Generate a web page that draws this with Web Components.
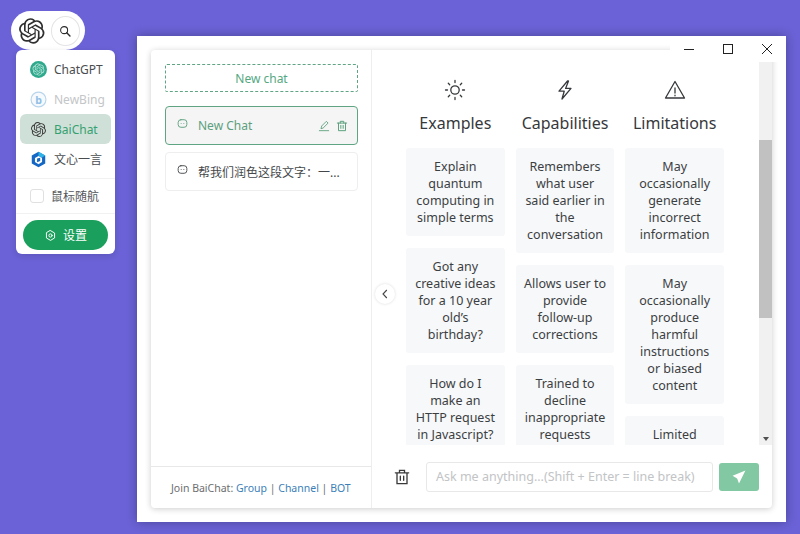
<!DOCTYPE html>
<html>
<head>
<meta charset="utf-8">
<style>
    html, body { margin: 0; height: 534px; overflow: hidden; }
    body {
        position: relative;
        background-color: #6a62d6;
        font-family: "Noto Sans", "Noto Sans CJK SC", sans-serif;
        color: #333639;
    }
</style>
</head>
<body>
<float-menu></float-menu>
<chat-window>
    <chat-sidebar slot="side"></chat-sidebar>
    <chat-main slot="main">
        <prompt-column title="Examples" icon="sun" cards="Explain quantum computing in simple terms|Got any creative ideas for a 10 year old’s birthday?|How do I make an HTTP request in Javascript?"></prompt-column>
        <prompt-column title="Capabilities" icon="bolt" cards="Remembers what user said earlier in the conversation|Allows user to provide follow-up corrections|Trained to decline inappropriate requests"></prompt-column>
        <prompt-column title="Limitations" icon="warn" cards="May occasionally generate incorrect information|May occasionally produce harmful instructions or biased content|Limited knowledge of world and events after 2021"></prompt-column>
    </chat-main>
</chat-window>

<script>
const OPENAI_PATH = "M22.2819 9.8211a5.9847 5.9847 0 0 0-.5157-4.9108 6.0462 6.0462 0 0 0-6.5098-2.9A6.0651 6.0651 0 0 0 4.9807 4.1818a5.9847 5.9847 0 0 0-3.9977 2.9 6.0462 6.0462 0 0 0 .7427 7.0966 5.98 5.98 0 0 0 .511 4.9107 6.051 6.051 0 0 0 6.5146 2.9001A5.9847 5.9847 0 0 0 13.2599 24a6.0557 6.0557 0 0 0 5.7718-4.2058 5.9894 5.9894 0 0 0 3.9977-2.9001 6.0557 6.0557 0 0 0-.7475-7.0729zm-9.022 12.6081a4.4755 4.4755 0 0 1-2.8764-1.0408l.1419-.0804 4.7783-2.7582a.7948.7948 0 0 0 .3927-.6813v-6.7369l2.02 1.1686a.071.071 0 0 1 .038.052v5.5826a4.504 4.504 0 0 1-4.4945 4.4944zm-9.6607-4.1254a4.4708 4.4708 0 0 1-.5346-3.0137l.142.0852 4.783 2.7582a.7712.7712 0 0 0 .7806 0l5.8428-3.3685v2.3324a.0804.0804 0 0 1-.0332.0615L9.74 19.9502a4.4992 4.4992 0 0 1-6.1408-1.6464zM2.3408 7.8956a4.485 4.485 0 0 1 2.3655-1.9728V11.6a.7664.7664 0 0 0 .3879.6765l5.8144 3.3543-2.0201 1.1685a.0757.0757 0 0 1-.071 0l-4.8303-2.7865A4.504 4.504 0 0 1 2.3408 7.872zm16.5963 3.8558L13.1038 8.364 15.1192 7.2a.0757.0757 0 0 1 .071 0l4.8303 2.7913a4.4944 4.4944 0 0 1-.6765 8.1042v-5.6772a.79.79 0 0 0-.407-.667zm2.0107-3.0231l-.142-.0852-4.7735-2.7818a.7759.7759 0 0 0-.7854 0L9.409 9.2297V6.8974a.0662.0662 0 0 1 .0284-.0615l4.8303-2.7866a4.4992 4.4992 0 0 1 6.6802 4.66zM8.3065 12.863l-2.02-1.1638a.0804.0804 0 0 1-.038-.0567V6.0742a4.4992 4.4992 0 0 1 7.3757-3.4537l-.142.0805L8.704 5.459a.7948.7948 0 0 0-.3927.6813zm1.0976-2.3654l2.602-1.4998 2.6069 1.4998v2.9994l-2.5974 1.4997-2.6067-1.4997Z";

const ICONS = {
    sun: '<circle cx="12" cy="12" r="4.2"/><path d="M12 2.5v2M12 19.5v2M2.5 12h2M19.5 12h2M5.3 5.3l1.4 1.4M17.3 17.3l1.4 1.4M5.3 18.7l1.4-1.4M17.3 6.7l1.4-1.4"/>',
    bolt: '<path d="M14.5 3 6 13.2h5.2L9 21l9-10.6h-5.4L15.5 3z" stroke-linejoin="round"/>',
    warn: '<path d="M12 3.5 2.5 20h19z" stroke-linejoin="round"/><path d="M12 10v5M12 17.2v.6"/>',
    trash: '<path d="M4 7h16M9 7V4h6v3M6 7v13h12V7M10 11v5M14 11v5"/>',
    chat: '<rect x="4" y="5" width="16" height="14" rx="5"/><path d="M9.5 12h.01M14.5 12h.01"/>',
    edit: '<path d="M4 20h16M7 16l1-4 8-8 3 3-8 8z" stroke-linejoin="round"/>',
    gear: '<path d="M12 3l7.5 4.4v9.2L12 21l-7.5-4.4V7.4z" stroke-linejoin="round"/><circle cx="12" cy="12" r="3"/>',
    search: '<circle cx="10.5" cy="10.5" r="6"/><path d="M15 15l5.5 5.5" stroke-width="2.4"/>'
};

function lineIcon( name, size, width ) {
    return `<svg width="${size}" height="${size}" viewBox="0 0 24 24" fill="none" stroke="currentColor" stroke-width="${width}" stroke-linecap="round">${ICONS[name]}</svg>`;
}

const MENU_LOGOS = {
    chatgpt: `<svg width="17" height="17" viewBox="0 0 24 24"><circle cx="12" cy="12" r="12" fill="#2fa98c"/><g transform="translate(3.6 3.6) scale(.7)"><path fill="#bfe8dc" d="${OPENAI_PATH}"/></g></svg>`,
    newbing: `<svg width="17" height="17" viewBox="0 0 24 24"><circle cx="12" cy="12" r="10.5" fill="#f4f9fd" stroke="#9cc4e4" stroke-width="1.6"/><text x="12" y="18" font-size="15" font-weight="700" text-anchor="middle" fill="#5ea5dc" font-family="Noto Sans">b</text></svg>`,
    baichat: `<svg width="15" height="15" viewBox="0 0 24 24"><path fill="#3c3c3c" d="${OPENAI_PATH}"/></svg>`,
    wenxin: `<svg width="17" height="17" viewBox="0 0 24 24"><path fill="#1467c4" d="M12 1l9.5 5.5v11L12 23l-9.5-5.5v-11z"/><path fill="#2fb4e8" d="M12 1l9.5 5.5-5 2.9L12 6.8z"/><path fill="#fff" d="M12 7l5 2.9v5.8L12 18.6l-5-2.9V9.9z"/><path fill="#1467c4" d="M10 10.5l4.4-1v4.6L10 16z"/></svg>`
};

const menuItemTemplate = document.createElement('template');
menuItemTemplate.innerHTML = `
    <style>
        :host {
            display: flex;
            align-items: center;
            height: 30px;
            margin: 0 4px;
            padding-left: 10px;
            gap: 7px;
            border-radius: 6px;
            font-size: 12px;
            color: #4a4d50;
        }
        :host([active]) { background-color: #cfe0d8; color: #35a070; }
        :host([muted]) { color: #c4c6c8; }
        .logo { width: 17px; display: flex; justify-content: center; }
        :host([muted]) .logo { opacity: .7; }
    </style>
    <span class="logo"></span>
    <slot></slot>
`;

class MenuItem extends HTMLElement {
    constructor(){
        super();

        this.attachShadow( { mode:"open" } );
        this.shadowRoot.appendChild( menuItemTemplate.content.cloneNode( true ) );
    }

    connectedCallback() {
        this.shadowRoot.querySelector('.logo').innerHTML = MENU_LOGOS[ this.getAttribute('logo') ];
    }
}

window.customElements.define( 'menu-item', MenuItem );

const floatMenuTemplate = document.createElement('template');
floatMenuTemplate.innerHTML = `
    <style>
        :host {
            position: absolute;
            left: 11px;
            top: 11px;
            width: 104px;
            display: block;
        }
        .pill {
            width: 74px;
            height: 39px;
            box-sizing: border-box;
            padding: 0 5px 0 8px;
            background-color: white;
            border-radius: 20px;
            display: flex;
            align-items: center;
            gap: 6px;
        }
        .search {
            width: 30px;
            height: 30px;
            box-sizing: border-box;
            border: 1px solid #e4e4e4;
            border-radius: 50%;
            display: flex;
            align-items: center;
            justify-content: center;
            color: #2b2b2b;
        }
        .menu {
            margin-left: 5px;
            width: 99px;
            height: 204px;
            box-sizing: border-box;
            padding-top: 4px;
            background-color: white;
            border-radius: 6px;
            box-shadow: 0 2px 6px rgba( 0, 0, 0, .12 );
        }
        .first { margin-bottom: -1px; }
        .gap { height: 29.5px; display: flex; flex-direction: column; }
        .line { height: 1px; background-color: #f1f1f1; }
        .random {
            height: 34px;
            display: flex;
            align-items: center;
            gap: 7px;
            padding-left: 14px;
            font-size: 12px;
            color: #55585b;
            border-top: 1px solid #f1f1f1;
            border-bottom: 1px solid #f1f1f1;
            margin-top: 4px;
        }
        .check {
            width: 14px;
            height: 14px;
            box-sizing: border-box;
            border: 1px solid #e0e0e0;
            border-radius: 3px;
        }
        .setting {
            margin: 6px 7px 0;
            height: 30px;
            background-color: #1aa05c;
            border-radius: 15px;
            color: white;
            font-size: 12px;
            display: flex;
            align-items: center;
            justify-content: center;
            gap: 6px;
        }
    </style>
    <div class="pill">
        <svg width="26" height="26" viewBox="0 0 24 24"><path fill="#2f2f2f" d="${OPENAI_PATH}"/></svg>
        <div class="search">${ lineIcon( 'search', 14, 1.8 ) }</div>
    </div>
    <div class="menu">
        <menu-item logo="chatgpt">ChatGPT</menu-item>
        <menu-item logo="newbing" muted>NewBing</menu-item>
        <menu-item logo="baichat" active>BaiChat</menu-item>
        <menu-item logo="wenxin">文心一言</menu-item>
        <div class="random"><span class="check"></span>鼠标随航</div>
        <div class="setting">${ lineIcon( 'gear', 13, 1.8 ) }<span>设置</span></div>
    </div>
`;

class FloatMenu extends HTMLElement {
    constructor(){
        super();

        this.attachShadow( { mode:"open" } );
        this.shadowRoot.appendChild( floatMenuTemplate.content.cloneNode( true ) );
    }
}

window.customElements.define( 'float-menu', FloatMenu );

const chatWindowTemplate = document.createElement('template');
chatWindowTemplate.innerHTML = `
    <style>
        :host {
            position: absolute;
            left: 137px;
            top: 36px;
            width: 649px;
            height: 486px;
            box-sizing: border-box;
            padding: 14px;
            display: block;
            background-color: white;
            box-shadow: 0 0 10px rgba( 0, 0, 0, .3 );
        }
        .card {
            height: 100%;
            display: flex;
            position: relative;
            border-radius: 4px;
            box-shadow: 0 1px 6px rgba( 0, 0, 0, .2 );
        }
        .controls {
            position: absolute;
            top: 0;
            right: 0;
            width: 116px;
            height: 26px;
            background-color: white;
            display: flex;
            color: #222;
        }
        .controls span {
            flex: 1;
            display: flex;
            align-items: center;
            justify-content: center;
        }
        .toggle {
            position: absolute;
            left: 224px;
            top: 234px;
            width: 20px;
            height: 20px;
            background-color: white;
            border-radius: 50%;
            box-shadow: 0 0 3px rgba( 0, 0, 0, .15 );
            display: flex;
            align-items: center;
            justify-content: center;
            color: #444;
        }
    </style>
    <div class="card">
        <slot name="side"></slot>
        <slot name="main"></slot>
        <div class="toggle">
            <svg width="10" height="10" viewBox="0 0 10 10" fill="none" stroke="currentColor" stroke-width="1.1"><path d="M6.8 1 3 5l3.8 4"/></svg>
        </div>
    </div>
    <div class="controls">
        <span><svg width="10" height="10"><path d="M0 5.5h10" stroke="currentColor"/></svg></span>
        <span><svg width="10" height="10"><rect x=".5" y=".5" width="9" height="9" fill="none" stroke="currentColor"/></svg></span>
        <span><svg width="10" height="10"><path d="M0 0l10 10M10 0 0 10" stroke="currentColor"/></svg></span>
    </div>
`;

class ChatWindow extends HTMLElement {
    constructor(){
        super();

        this.attachShadow( { mode:"open" } );
        this.shadowRoot.appendChild( chatWindowTemplate.content.cloneNode( true ) );
    }
}

window.customElements.define( 'chat-window', ChatWindow );

const chatSessionTemplate = document.createElement('template');
chatSessionTemplate.innerHTML = `
    <style>
        :host {
            display: flex;
            align-items: center;
            box-sizing: border-box;
            height: 39px;
            padding: 0 8px 0 10px;
            gap: 9px;
            border: 1px solid #eeeeee;
            border-radius: 4px;
            font-size: 12px;
            color: #45484b;
        }
        :host([active]) {
            border-color: #5fa583;
            background-color: #f4f5f4;
            color: #5d9f7e;
        }
        .name { flex: 1; white-space: nowrap; overflow: hidden; }
        .tools { display: none; gap: 4px; }
        :host([active]) .tools { display: flex; }
    </style>
    <span class="chat">${ lineIcon( 'chat', 13, 1.7 ) }</span>
    <span class="name"><slot></slot></span>
    <span class="tools">${ lineIcon( 'edit', 14, 1.5 ) }${ lineIcon( 'trash', 14, 1.7 ) }</span>
`;

class ChatSession extends HTMLElement {
    constructor(){
        super();

        this.attachShadow( { mode:"open" } );
        this.shadowRoot.appendChild( chatSessionTemplate.content.cloneNode( true ) );
    }
}

window.customElements.define( 'chat-session', ChatSession );

const chatSidebarTemplate = document.createElement('template');
chatSidebarTemplate.innerHTML = `
    <style>
        :host {
            width: 221px;
            flex: none;
            box-sizing: border-box;
            border-right: 1px solid #eeeeee;
            display: flex;
            flex-direction: column;
            height: 100%;
        }
        .list {
            flex: 1;
            padding: 14px 13px 0 14px;
            display: flex;
            flex-direction: column;
        }
        .new {
            height: 28px;
            box-sizing: border-box;
            border: 1px dashed #5fa583;
            border-radius: 2px;
            margin-bottom: 14px;
            font-size: 12px;
            color: #54a882;
            display: flex;
            align-items: center;
            justify-content: center;
        }
        chat-session + chat-session { margin-top: 7px; }
        .foot {
            height: 42px;
            box-sizing: border-box;
            border-top: 1px solid #e8e8e8;
            display: flex;
            align-items: center;
            padding-left: 20px;
            font-size: 10.5px;
            color: #6b6e70;
            white-space: pre;
        }
        .foot a { color: #3c7fb8; }
    </style>
    <div class="list">
        <div class="new">New chat</div>
        <chat-session active>New Chat</chat-session>
        <chat-session>帮我们润色这段文字：一...</chat-session>
    </div>
    <div class="foot">Join BaiChat: <a>Group</a> | <a>Channel</a> | <a>BOT</a></div>
`;

class ChatSidebar extends HTMLElement {
    constructor(){
        super();

        this.attachShadow( { mode:"open" } );
        this.shadowRoot.appendChild( chatSidebarTemplate.content.cloneNode( true ) );
    }
}

window.customElements.define( 'chat-sidebar', ChatSidebar );

const promptColumnTemplate = document.createElement('template');
promptColumnTemplate.innerHTML = `
    <style>
        :host {
            flex: 1;
            min-width: 0;
            display: flex;
            flex-direction: column;
            align-items: stretch;
            gap: 12px;
        }
        .head {
            display: flex;
            flex-direction: column;
            align-items: center;
            color: #36393c;
        }
        .head svg { display: block; }
        .title {
            margin-top: 8px;
            font-size: 16px;
            line-height: 26px;
            white-space: nowrap;
        }
        .card {
            padding: 10px 8px;
            background-color: #f7f8fa;
            border-radius: 3px;
            font-size: 12.5px;
            line-height: 17px;
            text-align: center;
            color: #3c3f42;
        }
    </style>
    <div class="head"><span class="icon"></span><span class="title"></span></div>
`;

class PromptColumn extends HTMLElement {
    constructor(){
        super();

        this.attachShadow( { mode:"open" } );
        this.shadowRoot.appendChild( promptColumnTemplate.content.cloneNode( true ) );
    }

    connectedCallback() {
        this.shadowRoot.querySelector('.icon').innerHTML = lineIcon( this.getAttribute('icon'), 24, 1.3 );
        this.shadowRoot.querySelector('.title').textContent = this.getAttribute('title');

        this.getAttribute('cards').split('|').forEach( text => {
            const card = document.createElement('div');
            card.className = 'card';
            card.textContent = text;
            this.shadowRoot.appendChild( card );
        });
    }
}

window.customElements.define( 'prompt-column', PromptColumn );

const chatMainTemplate = document.createElement('template');
chatMainTemplate.innerHTML = `
    <style>
        :host {
            flex: 1;
            min-width: 0;
            display: flex;
            flex-direction: column;
            height: 100%;
        }
        .top {
            margin-top: 12px;
            height: 383px;
            display: flex;
        }
        .columns {
            flex: 1;
            overflow: hidden;
            padding: 16px 35px 0 34px;
            display: flex;
            gap: 11px;
        }
        .bar {
            width: 13px;
            background-color: #f1f1f1;
            padding-top: 78px;
            display: flex;
            flex-direction: column;
            box-sizing: border-box;
        }
        .thumb { height: 178px; background-color: #c1c1c1; }
        .arrow {
            margin-top: auto;
            margin-bottom: 4px;
            align-self: center;
            border-left: 3.5px solid transparent;
            border-right: 3.5px solid transparent;
            border-top: 4px solid #505050;
        }
        .input-row {
            flex: 1;
            display: flex;
            align-items: center;
            padding: 0 13px 0 20px;
        }
        .bin { width: 20px; display: flex; color: #3a3a3a; margin-right: 14px; }
        .input {
            flex: 1;
            height: 30px;
            box-sizing: border-box;
            border: 1px solid #e8e8e8;
            border-radius: 3px;
            padding-left: 9px;
            display: flex;
            align-items: center;
            font-size: 12.5px;
            color: #c2c4c6;
            white-space: nowrap;
        }
        .send {
            width: 40px;
            height: 28px;
            margin-left: 6px;
            border-radius: 3px;
            background-color: #82c8a3;
            display: flex;
            align-items: center;
            justify-content: center;
        }
    </style>
    <div class="top">
        <div class="columns"><slot></slot></div>
        <div class="bar"><div class="thumb"></div><div class="arrow"></div></div>
    </div>
    <div class="input-row">
        <span class="bin">${ lineIcon( 'trash', 20, 1.6 ) }</span>
        <div class="input">Ask me anything...(Shift + Enter = line break)</div>
        <div class="send">
            <svg width="14" height="14" viewBox="0 0 24 24" fill="white"><path d="M23 1 1 10l7 4 1 1 3 8z"/></svg>
        </div>
    </div>
`;

class ChatMain extends HTMLElement {
    constructor(){
        super();

        this.attachShadow( { mode:"open" } );
        this.shadowRoot.appendChild( chatMainTemplate.content.cloneNode( true ) );
    }
}

window.customElements.define( 'chat-main', ChatMain );
</script>
</body>
</html>
